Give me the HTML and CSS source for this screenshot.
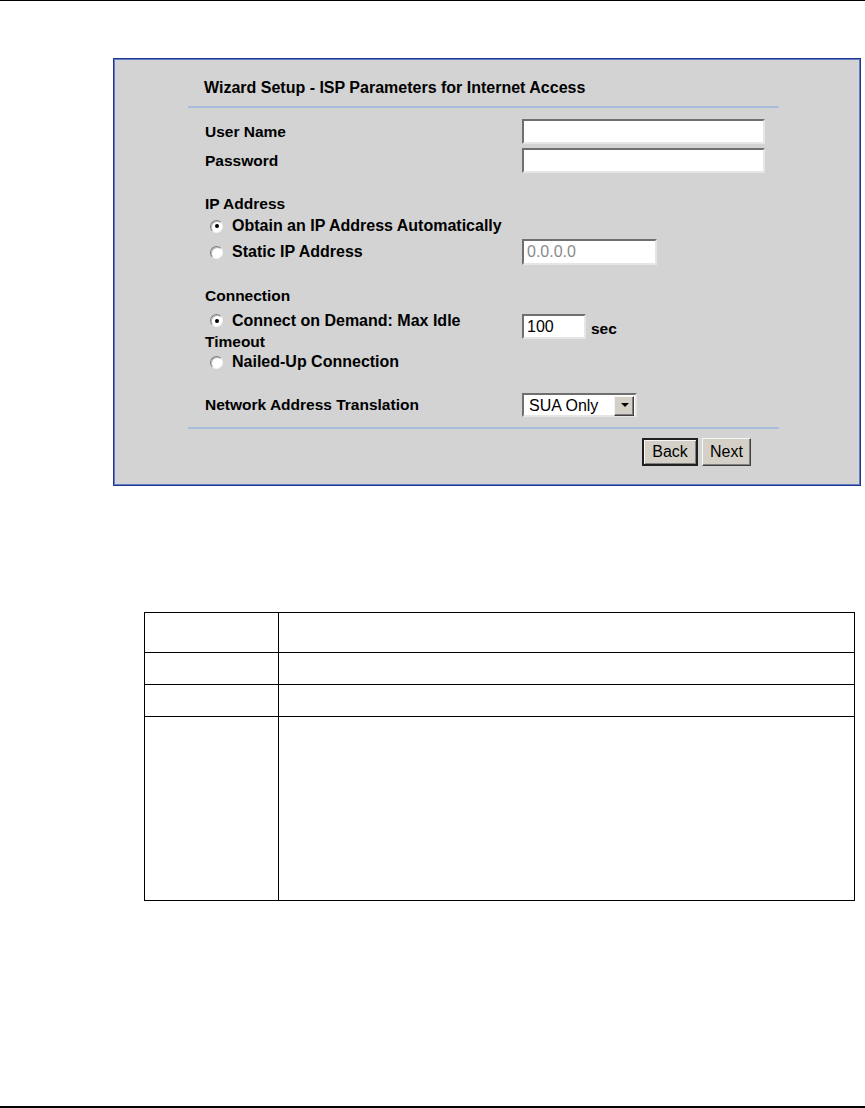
FILE: index.html
```html
<!DOCTYPE html>
<html lang="en">
  <head>
    <meta charset="UTF-8" />
    <title>Wizard Setup - ISP Parameters</title>
    <meta name="viewport" content="width=device-width, initial-scale=1.0" />
    <link rel="stylesheet" href="styles.css">
  </head>
  <body>
    <div class="page-top"></div>

    <!-- Wizard screen -->
    <div class="wizard">
      <h2 class="wizard-title">Wizard Setup - ISP Parameters for Internet Access</h2>
      <div class="rule"></div>

      <form class="wizard-form">
        <div class="row row-user">
          <label for="user">User Name</label>
          <input type="text" id="user" class="field field-long" />
        </div>
        <div class="row row-pass">
          <label for="pass">Password</label>
          <input type="password" id="pass" class="field field-long" />
        </div>

        <div class="heading heading-ip">IP Address</div>
        <div class="row row-radio">
          <label class="opt"><input type="radio" name="ip" checked /> Obtain an IP Address Automatically</label>
        </div>
        <div class="row row-static">
          <label class="opt"><input type="radio" name="ip" /> Static IP Address</label>
          <input type="text" class="field field-ip" value="0.0.0.0" disabled />
        </div>

        <div class="heading heading-conn">Connection</div>
        <div class="row row-demand">
          <label class="opt opt-wrap"><input type="radio" name="conn" checked />Connect on Demand: Max Idle<br><span class="wrap-back">Timeout</span></label>
          <div class="idle">
            <input type="text" class="field field-idle" value="100" />
            <span class="unit">sec</span>
          </div>
        </div>
        <div class="row row-radio row-nailed">
          <label class="opt"><input type="radio" name="conn" /> Nailed-Up Connection</label>
        </div>

        <div class="row row-nat">
          <label for="nat">Network Address Translation</label>
          <span class="select-wrap">
            <select id="nat" class="field field-select">
              <option>SUA Only</option>
              <option>Full Feature</option>
              <option>None</option>
            </select>
          </span>
        </div>

        <div class="rule rule-bottom"></div>
        <div class="actions">
          <button type="button" class="win-btn btn-back">Back</button>
          <button type="button" class="win-btn btn-next">Next</button>
        </div>
      </form>
    </div>

    <!-- Field description table -->
    <table class="desc-table">
      <tr class="head-row"><td class="label-col"></td><td></td></tr>
      <tr class="small-row"><td class="label-col"></td><td></td></tr>
      <tr class="small-row"><td class="label-col"></td><td></td></tr>
      <tr class="tall-row"><td class="label-col"></td><td></td></tr>
    </table>

    <div class="page-bottom"></div>
  </body>
</html>
```

FILE: styles.css
```css
* {
  box-sizing: border-box;
}

html,
body {
  margin: 0;
  padding: 0;
}

body {
  font-family: "Liberation Sans", Arial, sans-serif;
  background: #fff;
  color: #000;
  height: 1108px;
  display: flex;
  flex-direction: column;
}

.page-top {
  height: 1px;
  background: #000;
}

.page-bottom {
  margin-top: auto;
  height: 2px;
  background: #000;
}

/* wizard panel */
.wizard {
  margin: 57px 0 0 113px;
  width: 748px;
  background: #d3d3d3;
  border: 1px solid #22338a;
  box-shadow: inset 0 0 0 1px #5f7fc6;
  padding: 21px 81px 19px 74px;
}

.wizard-title {
  margin: 0;
  padding-left: 16px;
  font-size: 16px;
  line-height: 16px;
  font-weight: bold;
}

.rule {
  margin-top: 10px;
  height: 2px;
  background: #a9bedf;
}

.wizard-form {
  margin: 0;
}

.row {
  display: flex;
  align-items: center;
  font-size: 15.5px;
  font-weight: bold;
}

.row > label,
.row > .opt {
  width: 334px;
  flex-shrink: 0;
  padding-left: 17px;
}

.row-user {
  margin-top: 11px;
  height: 25px;
}

.row-pass {
  margin-top: 4px;
  height: 25px;
}

.heading {
  font-size: 15.5px;
  font-weight: bold;
  line-height: 16px;
  padding-left: 17px;
  margin-top: 23px;
}

.row-radio {
  margin-top: 6px;
  height: 16px;
}

.row-static {
  margin-top: 5px;
  height: 26px;
}

.row > .opt {
  padding-left: 23px;
  display: flex;
  align-items: center;
  font-size: 16px;
}

.opt input[type="radio"] {
  -webkit-appearance: none;
  appearance: none;
  width: 13px;
  height: 13px;
  margin: 0 9px 0 -1px;
  border-radius: 50%;
  background: #fff;
  border: 1px solid;
  border-color: #7c7c7c #f4f4f4 #f4f4f4 #7c7c7c;
  box-shadow: inset 1px 1px 0 #b8b8b8;
  flex-shrink: 0;
  position: relative;
}

.opt input[type="radio"]:checked::after {
  content: "";
  position: absolute;
  left: 3.5px;
  top: 3.5px;
  width: 4px;
  height: 4px;
  border-radius: 50%;
  background: #000;
}

.row-demand {
  margin-top: 6px;
  align-items: flex-start;
}

.row > .opt-wrap {
  display: block;
  line-height: 21px;
}

.opt-wrap input[type="radio"] {
  vertical-align: -1px;
}

.wrap-back {
  margin-left: -6px;
  font-size: 15.5px;
}

.idle {
  display: flex;
  align-items: center;
  margin-top: 4px;
}

.unit {
  margin-left: 5px;
  padding-top: 4px;
}

.row-nailed {
  margin-top: 2px;
}

.row-nat {
  margin-top: 23px;
  height: 24px;
}

/* classic sunken inputs */
.field {
  font-family: "Liberation Sans", Arial, sans-serif;
  font-size: 16px;
  font-weight: normal;
  color: #000;
  background: #fff;
  border: 2px solid;
  border-color: #6f6f6f #e6e6e6 #e6e6e6 #6f6f6f;
  padding: 0 3px;
  margin: 0;
  outline: none;
}

.field-long {
  width: 243px;
  height: 25px;
}

.field-ip {
  width: 135px;
  height: 26px;
  color: #8a8a8a;
}

.field-idle {
  width: 64px;
  height: 25px;
}

.select-wrap {
  position: relative;
  display: inline-block;
}

.field-select {
  -webkit-appearance: none;
  appearance: none;
  width: 115px;
  height: 24px;
  padding: 0 22px 0 5px;
  border-radius: 0;
}

.select-wrap::after {
  content: "";
  position: absolute;
  right: 3px;
  top: 3px;
  width: 18px;
  height: 18px;
  background: #d4d0c8;
  border: 1px solid;
  border-color: #f4f4f4 #404040 #404040 #f4f4f4;
  box-shadow: inset -1px -1px 0 #808080;
  pointer-events: none;
}

.select-wrap::before {
  content: "";
  position: absolute;
  right: 8px;
  top: 10px;
  border-left: 4px solid transparent;
  border-right: 4px solid transparent;
  border-top: 4px solid #000;
  z-index: 1;
  pointer-events: none;
}

.rule-bottom {
  margin-top: 10px;
}

.actions {
  display: flex;
  justify-content: flex-end;
  gap: 4px;
  margin-top: 9px;
  padding-right: 28px;
}

.win-btn {
  font-family: "Liberation Sans", Arial, sans-serif;
  font-size: 16px;
  color: #000;
  background: #d4d0c8;
  height: 28px;
  padding: 0;
  border: 1px solid;
  border-color: #f6f6f6 #404040 #404040 #f6f6f6;
  box-shadow: inset -1px -1px 0 #808080;
  cursor: pointer;
}

.btn-back {
  width: 56px;
  border: 2px solid #202020;
  box-shadow: inset 1px 1px 0 #f6f6f6, inset -1px -1px 0 #808080;
}

.btn-next {
  width: 49px;
}

/* description table */
.desc-table {
  margin: 126px 0 0 144px;
  width: 711px;
  border-collapse: collapse;
}

.desc-table td {
  border: 1px solid #000;
  padding: 0;
}

.desc-table .label-col {
  width: 134px;
}

.head-row {
  height: 40px;
}

.small-row {
  height: 32px;
}

.tall-row {
  height: 184px;
}
```
